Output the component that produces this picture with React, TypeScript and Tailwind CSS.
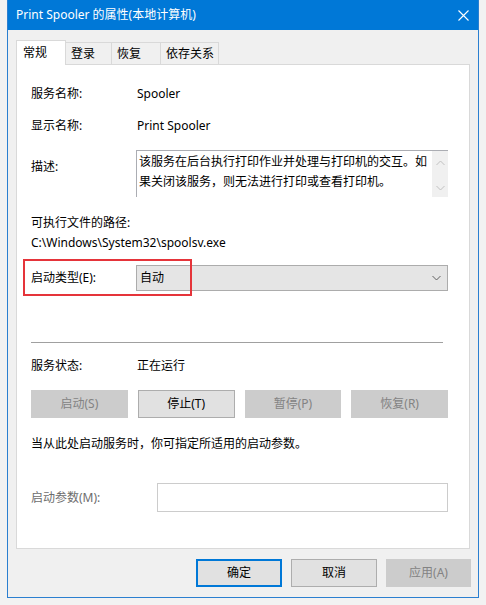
import React from "react";

const FONT = "font-['Noto_Sans','Noto_Sans_CJK_SC',sans-serif]";

function Chevron({ up = false, color = "#606060" }: { up?: boolean; color?: string }) {
  return (
    <svg width="9" height="6" viewBox="0 0 9 6" className="block">
      <polyline
        points={up ? "0.5,5 4.5,1 8.5,5" : "0.5,1 4.5,5 8.5,1"}
        fill="none"
        stroke={color}
        strokeWidth="1"
      />
    </svg>
  );
}

function Tab({ label, width, active = false }: { label: string; width: number; active?: boolean }) {
  if (active) {
    return (
      <div
        className="relative z-10 -mb-px flex h-[25px] items-start border-x border-t border-[#d9d9d9] bg-white pl-[6px] pt-[2px]"
        style={{ width }}
      >
        {label}
      </div>
    );
  }
  return (
    <div
      className="flex h-[22px] items-start border-t border-r border-[#d9d9d9] bg-[#f0f0f0] pl-[5px] pt-[1px]"
      style={{ width }}
    >
      {label}
    </div>
  );
}

function Btn({ label, disabled = false, primary = false, className = "" }: { label: string; disabled?: boolean; primary?: boolean; className?: string }) {
  const look = disabled
    ? "bg-[#cccccc] border border-[#cccccc] text-[#838383]"
    : primary
      ? "bg-[#e1e1e1] border-2 border-[#0078d7] text-black"
      : "bg-[#e1e1e1] border border-[#adadad] text-black";
  return <div className={`flex h-[28px] items-center justify-center ${look} ${className}`}>{label}</div>;
}

export default function App() {
  return (
    <div className={`h-[605px] w-[486px] overflow-hidden bg-[#f2f2f2] pl-[7px] text-[12px] leading-[20px] text-black ${FONT}`}>
      <div className="flex h-[598px] w-[472px] flex-col border-x border-b border-[#2b7fd0] bg-[#f0f0f0]">
        {/* Title bar */}
        <div className="flex h-[30px] shrink-0 items-center justify-between bg-[#0078d7] pl-[8px] pr-[9px] text-white">
          <span>Print Spooler 的属性(本地计算机)</span>
          <svg width="11" height="11" viewBox="0 0 11 11">
            <path d="M0.5 0.5 L10.5 10.5 M10.5 0.5 L0.5 10.5" stroke="white" strokeWidth="1.1" />
          </svg>
        </div>

        <div className="flex flex-1 flex-col px-[8px]">
          {/* Tabs */}
          <div className="mt-[10px] flex items-end">
            <Tab label="常规" width={50} active />
            <Tab label="登录" width={46} />
            <Tab label="恢复" width={49} />
            <Tab label="依存关系" width={58} />
          </div>

          {/* Panel */}
          <div className="flex h-[485px] flex-col border border-[#d9d9d9] bg-white pl-[14px] pr-[21px]">
            <div className="mt-[19px] flex h-[20px] items-center">
              <span className="w-[106px]">服务名称:</span>
              <span>Spooler</span>
            </div>
            <div className="mt-[12px] flex h-[20px] items-center">
              <span className="w-[106px]">显示名称:</span>
              <span>Print Spooler</span>
            </div>
            <div className="mt-[14px] flex items-start">
              <span className="mt-[7px] w-[105px]">描述:</span>
              <div className="flex h-[47px] flex-1 border-l border-t border-[#abadb3]">
                <div className="flex-1 pl-[2px] pt-px leading-[20px]">
                  该服务在后台执行打印作业并处理与打印机的交互。如
                  <br />
                  果关闭该服务，则无法进行打印或查看打印机。
                </div>
                <div className="flex w-[16px] flex-col items-center justify-between bg-[#f0f0f0] pb-[6px] pt-[9px]">
                  <Chevron up color="#c0c0c0" />
                  <Chevron color="#c0c0c0" />
                </div>
              </div>
            </div>
            <div className="mt-[16px] h-[20px]">可执行文件的路径:</div>
            <div className="h-[20px]">C:\Windows\System32\spoolsv.exe</div>

            <div className="relative mt-[12px] flex h-[26px] items-center">
              <div className="absolute left-[-8px] top-[-6px] h-[37px] w-[169px] border-2 border-[#e5343a]" />
              <span className="w-[105px]">启动类型(E):</span>
              <div className="flex h-[26px] flex-1 items-center justify-between border border-[#acacac] bg-[#e5e5e5] pl-[3px] pr-[6px]">
                <span>自动</span>
                <Chevron />
              </div>
            </div>

            <div className="mr-[5px] mt-[51px] h-px bg-[#a0a0a0]" />

            <div className="mt-[13px] flex h-[20px] items-center">
              <span className="w-[106px]">服务状态:</span>
              <span>正在运行</span>
            </div>

            <div className="mt-[14px] grid grid-cols-4 gap-[10px]">
              <Btn label="启动(S)" disabled />
              <Btn label="停止(T)" />
              <Btn label="暂停(P)" disabled />
              <Btn label="恢复(R)" disabled />
            </div>

            <div className="mt-[16px] h-[20px]">当从此处启动服务时，你可指定所适用的启动参数。</div>

            <div className="mt-[29px] flex items-center">
              <span className="w-[126px] text-[#6d6d6d]">启动参数(M):</span>
              <div className="h-[29px] flex-1 border border-[#cccccc] bg-white" />
            </div>
          </div>

          {/* Dialog buttons */}
          <div className="-mr-px mt-[10px] flex justify-end gap-[9px]">
            <Btn label="确定" primary className="w-[86px]" />
            <Btn label="取消" className="w-[86px]" />
            <Btn label="应用(A)" disabled className="w-[85px]" />
          </div>
        </div>
      </div>
    </div>
  );
}
